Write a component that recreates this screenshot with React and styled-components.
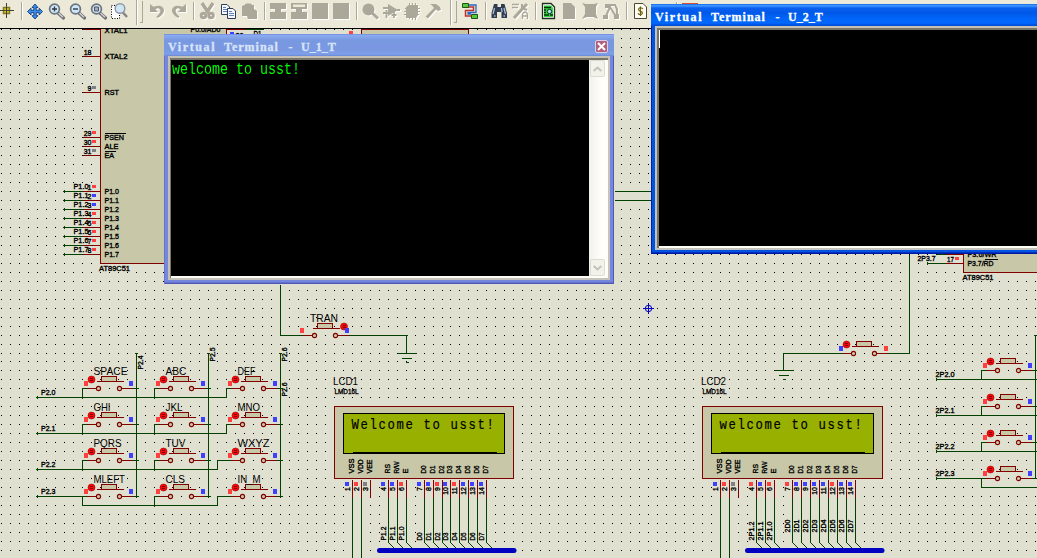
import React from "react";
import styled, { createGlobalStyle, css } from "styled-components";

const C = {
  canvas: "#e0e0d0", body: "#c8c8a8", pin: "#800000", wire: "#004000",
  bus: "#0000c0", hi: "#ff4040", lo: "#4040ff", off: "#808080",
  bar: "#ece9d8", dis: "#aca899", glass: "#98b000",
};

const GlobalStyle = createGlobalStyle`
  html, body { margin: 0; padding: 0; overflow: hidden; background: ${C.canvas}; }
`;

/* ---------- frame ---------- */
const Page = styled.div`
  position: relative;
  display: flex;
  flex-direction: column;
  width: 1037px;
  height: 558px;
  overflow: hidden;
  font-family: "Liberation Sans", Arial, sans-serif;
`;
const Toolbar = styled.div`
  display: flex;
  align-items: flex-start;
  flex: none;
  height: 28px;
  border-bottom: 1px solid #000;
  background: ${C.bar};
`;
const Tool = styled.div`
  flex: none;
  display: flex;
  justify-content: center;
  width: 21px;
  padding-top: 3px;
  margin-left: ${(p) => p.$shift || 0}px;
`;
const Glyph = styled.svg`
  width: 17px;
  height: 17px;
  display: block;
  overflow: visible;
  ${(p) => p.$off && css`
    color: ${C.dis};
    filter: drop-shadow(1px 1px 0 #fff);
  `}
`;
const Divider = styled.div`
  flex: none;
  width: 1px;
  height: 18px;
  margin: 2px ${(p) => p.$after ?? 3}px 0 4px;
  background: ${C.dis};
  box-shadow: 1px 0 0 #fff;
`;
const Grip = styled.div`
  flex: none;
  display: flex;
  gap: 3px;
  width: ${(p) => p.$w}px;
  height: 25px;
  padding-left: 6px;
  box-sizing: border-box;
  &::before { content: ""; width: 1px; height: 25px; background: ${C.dis}; box-shadow: 1px 0 0 #fff; }
  &::after { content: ""; width: 2px; height: 21px; margin-top: 1px; border: solid ${C.dis}; border-width: 0 1px 1px 0; }
`;

const Lens = ({ children }) => (
  <>
    <path d="M10 10 L15.500 15" stroke="#707078" strokeWidth="3.200" strokeLinecap="round" />
    <path d="M10.500 10 L15 14.300" stroke="#d4d4d4" strokeWidth="1.300" />
    <circle cx="6.500" cy="6" r="4.900" fill="#cfe6f4" stroke="#6c7480" strokeWidth="1.700" />
    {children}
  </>
);

const GLYPHS = {
  origin: <><path d="M1 7.500H16M8.500 0V15" stroke="#404030" /><path d="M5.500 4.500h6v6h-6z" fill="#d8cc20" stroke="#807a20" strokeWidth="1.500" /><path d="M5 7.500H12M8.500 4V11" stroke="#404030" /></>,
  move: <><path d="M8 1L11 4.500H9.200V7.300H12.200V5.200L15.500 8.500L12.200 12V9.700H9.200V12.700H11L8 16L5 12.700H6.800V9.700H4V12L0.500 8.500L4 5.200V7.300H6.800V4.500H5z" fill="#3c90e8" stroke="#103c88" strokeWidth=".9" /></>,
  zin: <Lens><path d="M4 6H9M6.500 3.500V8.500" stroke="#303848" strokeWidth="1.300" /></Lens>,
  zout: <Lens><path d="M4 6H9" stroke="#303848" strokeWidth="1.400" /></Lens>,
  zall: <Lens><path d="M4.500 4h4v4h-4z" fill="#aab" stroke="#505868" /></Lens>,
  zarea: <><path d="M.5 2.500H8.500V15.500H.5z" fill="#fff" stroke="#000" strokeDasharray="1 1.500" /><g transform="translate(2 0)"><path d="M10 9.500L14 14" stroke="#888" strokeWidth="2.600" /><circle cx="7" cy="5.500" r="4.800" fill="#cfe6f4" stroke="#9098a4" strokeWidth="1.500" /></g></>,
  undo: <path d="M1 1V9H9L6.500 6.300Q10 4 11.300 7Q12 10 7.500 13.500L8.500 15Q15.500 11.500 15 6.500Q13 .5 4.500 3.800z" fill="currentColor" />,
  redo: <path d="M16 1V9H8L10.500 6.300Q7 4 5.700 7Q5 10 9.500 13.500L8.500 15Q1.500 11.500 2 6.500Q4 .5 12.500 3.800z" fill="currentColor" />,
  cut: <><path d="M3 0L9.500 10M14 0L7.500 10" stroke="currentColor" strokeWidth="3.400" /><circle cx="4.500" cy="12.500" r="2.300" fill="none" stroke="currentColor" strokeWidth="3" /><circle cx="12" cy="12.500" r="2.300" fill="none" stroke="currentColor" strokeWidth="3" /></>,
  copy: <><path d="M1.500 1.500H7L9.500 4V11.500H1.500z" fill="#f4f8ff" stroke="#303c58" /><path d="M3 4.500h3M3 6.500h4M3 8.500h4" stroke="#6080b0" /><path d="M7.500 5.500H13L15.500 8V15.500H7.500z" fill="#f4f8ff" stroke="#303c58" /><path d="M9 8.500h3M9 10.500h5M9 12.500h5" stroke="#6080b0" /></>,
  paste: <path d="M1 3Q4 2 5 .5H10L11 2H13V6L16 8V16H7L6 13H1z" fill="currentColor" />,
  block: <path d="M0 0H16V6H11V9H16V16H0V9H5V6H0z" fill="currentColor" />,
  block2: <><path d="M0 0H16V6H11V9H16V16H0V9H5V6H0z" fill="currentColor" /><path d="M2 1.500H14V4H2z" fill="#ece9d8" /></>,
  square: <path d="M0 0H16V16H0z" fill="currentColor" />,
  pick: <><circle cx="6.500" cy="6.500" r="6" fill="currentColor" /><path d="M9 9L16 15.500" stroke="currentColor" strokeWidth="3" /></>,
  gate: <><path d="M5 1L15 7L5 13z" fill="currentColor" /><path d="M0 5H6M0 10H8M3.500 7V15M14 7H17M11 9V15M8.500 12H13.500" stroke="currentColor" strokeWidth="1.800" /></>,
  chip: <><path d="M2 4L5 2H14V12L12 15H2z" fill="currentColor" /><path d="M1 5.500H16M0 8.500H16M0 11.500H15M5.500 0V16M8.500 0V17M11.500 0V17" stroke="currentColor" /></>,
  hammer: <path d="M5 1H11L15 4L16 7L13 8L11 6.500L3 15.500L0.500 13.500L9 5L7.500 3z" fill="currentColor" />,
  wire: <><path d="M6 4H11.500V7.500H3.500V13H9" fill="none" stroke="#c03028" strokeWidth="1.500" /><path d="M6 2H14V9.500H6V11H9" fill="none" stroke="#2868c8" strokeWidth="1.300" /><path d="M.5 .5h6v4h-6zM9.500 11.500h6v4h-6z" fill="#58c838" stroke="#185818" /></>,
  binoc: <><path d="M3 1H6.500V4H10V1H13.500L16 10V15H10.500V9H6V15H.5V10z" fill="#303c50" /><path d="M3.500 5L2 11M10.500 5L11 9M13 5L14.500 11M3 13h1.500M12.500 13H14" stroke="#a8bcd8" strokeWidth="1.300" /></>,
  wrench: <><path d="M0 1.500H7M0 4.500H6" stroke="currentColor" strokeWidth="1.500" /><path d="M15 1L11 5L2 15" stroke="currentColor" strokeWidth="3" /><path d="M10 1V5L15 7" stroke="currentColor" strokeWidth="2" fill="none" /><path d="M10.500 16V11Q13 7 15.500 11V16M10.500 13H15.500" fill="none" stroke="currentColor" strokeWidth="1.300" /></>,
  sheet: <><path d="M2.500 .5H11L14.500 4V15.500H2.500z" fill="#fff" stroke="#203020" strokeWidth="1.300" /><path d="M4 2.500H11.500L13 5V14H4z" fill="#38d848" /><path d="M4 4.500H11M4 7H6M4 9.500H6M4 12H9M10 12h3" stroke="#063008" strokeWidth="1.300" /><circle cx="9.500" cy="8.500" r="2.200" fill="#a8e8f0" stroke="#102818" /></>,
  page: <path d="M2 0H10L14 4V16H2z" fill="currentColor" />,
  cross: <path d="M0 0L4 1H12L16 0L14 4V11L16 16L11 14H5L0 16L3 11V4z" fill="currentColor" />,
  nodes: <><path d="M2 1H8V5H2zM0 12H5V16H0zM11 11H16V16H11z" fill="currentColor" /><path d="M3 13L7 4M7 4L12 12M8 2H12L14 6V11" fill="none" stroke="currentColor" strokeWidth="2" /></>,
  bill: <><path d="M2.500 .5H11L14.500 4V15.500H2.500z" fill="#fffef0" stroke="#484838" /><path d="M11 6Q10 4.500 8 4.800Q6 5.500 7 7.500L10 9Q11 11 9 11.500Q6.500 11.800 6 10.300M8.500 3.500V13" fill="none" stroke="#706010" strokeWidth="1.200" /></>,
  ares: <path d="M0 0H16V16H0z" fill="#d85030" />,
};
const T = ({ n, off, shift }) => (
  <Tool $shift={shift}><Glyph viewBox="0 0 17 17" fill="none" $off={off}>{GLYPHS[n]}</Glyph></Tool>
);

/* ---------- schematic ---------- */
const Sheet = styled.svg`
  display: block;
  flex: none;
  width: 1037px;
  height: 529px;
  background: ${C.canvas};
`;
const Line = styled.path`
  fill: none;
  stroke: ${(p) => p.$c || C.wire};
  stroke-width: 1px;
  shape-rendering: crispEdges;
`;
const Box = styled.rect`
  fill: ${(p) => p.$f || C.body};
  stroke: ${(p) => p.$c || C.pin};
  stroke-width: 1px;
  shape-rendering: crispEdges;
`;
const Led = styled.rect`
  fill: ${(p) => p.$c};
  shape-rendering: crispEdges;
`;
const Small = styled.text`
  font: 7px "Liberation Sans", Arial, sans-serif;
  fill: #000;
  stroke: #000;
  stroke-width: 0.35px;
`;
const Name = styled.text`
  font: 11.500px "Liberation Sans", Arial, sans-serif;
  fill: #000;
`;
const Lcd = styled.text`
  font: 15px "Liberation Mono", "Courier New", monospace;
  letter-spacing: 1.975px;
  fill: #000;
  stroke: #000;
  stroke-width: 0.2px;
  white-space: pre;
`;
const Terminal = styled.circle`
  fill: ${C.body};
  stroke: ${C.pin};
  stroke-width: 1.1px;
`;

const L = ({ x, y, w, children, up, end }) => (
  <Small
    x={up ? 0 : x} y={up ? 0 : y}
    transform={up ? `translate(${x} ${y}) rotate(-90)` : undefined}
    textLength={w} lengthAdjust="spacingAndGlyphs" textAnchor={end ? "end" : "start"}
  >{children}</Small>
);
const N = ({ x, y, w, children }) => (
  <Name x={x} y={y} textLength={w} lengthAdjust="spacingAndGlyphs">{children}</Name>
);
const Sq = ({ x, y, c, h = 4 }) => <Led x={x - 0.5} y={y - 0.5} width="4" height={h} $c={c} />;

const xs = [], ys = [];
for (let x = 1; x <= 442; x += 9) xs.push(x);
for (let x = 450; x < 1037; x += 9) xs.push(x);
for (let y = 29; y <= 353; y += 9) ys.push(y);
for (let y = 361; y < 558; y += 9) ys.push(y);
const DOTS = ys.map((y) => xs.map((x) => `M${x - 0.5} ${y}h1`).join("")).join("");

const Switch = ({ x, y, left = C.hi, right = C.lo, led = -7 }) => (
  <g>
    <Line $c={C.pin} d={`M${x - 12} ${y}H${x - 2}M${x + 23} ${y}H${x + 34}M${x - 2} ${y - 7}H${x + 25}`} />
    <Terminal cx={x} cy={y} r="2.100" />
    <Terminal cx={x + 21} cy={y} r="2.100" />
    <Box x={x + 3} y={y - 12} width="15" height="5" />
    <circle cx={x + led} cy={y - 9} r="3.500" fill="#f80808" stroke="#a00000" strokeWidth=".6" />
    <Line $c="#800000" d={`M${x + led - 1.500} ${y - 10}h3M${x + led - 1.500} ${y - 8}h3`} />
    <Sq x={x - 14} y={y - 7} c={left} h={5} />
    <Sq x={x + 31} y={y - 7} c={right} h={5} />
  </g>
);

const Ground = ({ x, y }) => (
  <Line d={`M${x - 9} ${y}h19M${x - 5} ${y + 5}h10M${x - 1} ${y + 9}h3`} />
);

const LcdModule = ({ id, x, pins, leds, text, nets, busX, prefix }) => {
  const names = ["VSS", "VDD", "VEE", "RS", "R/W", "E", "D0", "D1", "D2", "D3", "D4", "D5", "D6", "D7"];
  const w = [15, 14, 14, 9.5, 12, 5, 8, 8, 8, 8, 8, 8, 8, 8];
  return (
    <g>
      <N x={x - 1.500} y={384.500} w={25}>{id}</N>
      <L x={x} y={393.500} w={24}>LMD16L</L>
      <Box x={x} y={406} width={id === "LCD1" ? 179 : 180} height={72} />
      <Box x={x + 9} y={413} width={id === "LCD1" ? 161 : 162} height={40} $f={C.glass} $c="#000" />
      <Line $c="#000" d={`M${x + 18} 452H${x + 162}`} />
      <Lcd transform={`translate(${x + 17} 428) scale(.82 1)`}>{text}</Lcd>
      {pins.map((p, i) => (
        <g key={p}>
          <Line $c={C.pin} d={`M${p} 479V497`} />
          {i < 2 && <Line d={`M${p} 497V558`} />}
          {i > 2 && <Line d={`M${p} 497V542`} />}
          {i > 2 && <path d={`M${p} 542L${p + 8} 550`} stroke={C.wire} fill="none" />}
          <L up x={p + 1.500} y={473} w={w[i]}>{names[i]}</L>
          <Sq x={p - 7} y={482} c={{ b: C.lo, r: C.hi, g: C.off }[leds[i]]} />
          <L up end x={p - 2.500} y={486.500}>{i + 1}</L>
          {i > 2 && (
            <L up x={p - 3} y={i > 5 && prefix ? 532 : 540} w={(i > 5 ? 8 : 14) + (prefix ? 5 : 0)}>
              {nets[i - 3]}
            </L>
          )}
        </g>
      ))}
      <path d={`M${busX + 2} 550H${busX + 136.500}`} stroke={C.bus} strokeWidth="5" strokeLinecap="round" />
    </g>
  );
};

const KEYS = [
  [["SPACE", 34], ["ABC", 21], ["DEF", 18]],
  [["GHI", 17], ["JKL", 17], ["MNO", 22.500]],
  [["PQRS", 28], ["TUV", 20], ["WXYZ", 32]],
  [["MLEFT", 31.500], ["CLS", 19.500], ["IN_M", 23]],
];

const Keypad = () => (
  <g>
    <Line d="M136 352V497M208 352V497M280 352V497" />
    <Line d="M37 397H226V388H231M37 433H226V424H231M37 469H217V460H231M37 496H86M82 496V505H217V496H231M154 506V496H158" />
    {[388, 424, 460].map((y) => <Line key={y} d={`M86 ${y}H82V${y + 10}M158 ${y}H154V${y + 10}`} />)}
    {[0, 1, 2, 3].map((r) => <Line key={r} d={`M131 ${388 + r * 36}h7M203 ${388 + r * 36}h7M275 ${388 + r * 36}h7`} />)}
    {[397, 433, 469, 496].map((y, i) => (
      <g key={y}>
        <Line d={`M37 ${y - 1.500}v3M35.500 ${y}h2`} />
        <L x={40.500} y={y - 2.500} w={14.500}>{`P2.${i}`}</L>
      </g>
    ))}
    {[136, 208, 280].map((x) => <Line key={x} d={`M${x - 1.500} 353h3`} />)}
    {KEYS.map((row, r) => row.map(([t, w], c) => (
      <g key={t}>
        <Switch x={98 + c * 72} y={388 + r * 36} />
        <N x={93 + c * 72} y={374.500 + r * 36} w={w}>{t}</N>
      </g>
    )))}
    <L up x={142.500} y={369} w={14}>P2.4</L>
    <L up x={214.500} y={361} w={14}>P2.5</L>
    <L up x={286.500} y={361} w={14}>P2.6</L>
    <L up x={286.500} y={396} w={14}>P2.6</L>
  </g>
);

const Schematic = () => (
  <Sheet viewBox="0 29 1037 529">
    <g transform="translate(.5 .5)">
      <Line $c="#000" d={DOTS} />
      {/* left controller */}
      <Box x={100} y={20} width={126} height={243} />
      <L x={104} y={32.500} w={23}>XTAL1</L>
      <L x={190} y={31.500} w={30}>P0.0/AD0</L>
      <Line $c={C.pin} d="M82 29H100M226 29H245" />
      <Line d="M245 29H263" />
      <Sq x={230} y={32} c={C.lo} />
      <L x={235} y={37} w={8}>39</L>
      <L x={253} y={35} w={8}>D1</L>
      <Box x={361} y={29} width={107} height={30} />
      <Sq x={349} y={31} c={C.hi} />
      {[["18", "XTAL2", 56, 23], ["9", "RST", 92, 14.500, C.off], ["29", "PSEN", 137, 19.500, C.hi], ["30", "ALE", 146, 14, C.hi], ["31", "EA", 155, 9.500, C.off]].map(([n, t, y, w, c]) => (
        <g key={t}>
          <Line $c={C.pin} d={`M82 ${y}H100`} />
          <L x={91} y={y - 2} end>{n}</L>
          <L x={104} y={y + 2.500} w={w}>{t}</L>
          {c && <Sq x={92} y={y - 6} c={c} h={3} />}
        </g>
      ))}
      <Line $c="#000" d="M104 133h21M104 151h11" />
      {[C.hi, C.lo, C.lo, C.hi, C.hi, C.hi, C.hi, C.hi].map((c, i) => {
        const y = 191 + i * 9;
        return (
          <g key={i}>
            <Line d={`M62.500 ${y}H82M64 ${y - 1.500}v3`} />
            <Line $c={C.pin} d={`M82 ${y}H100`} />
            <L x={73} y={y - 2.500} w={15}>{`P1.${i}`}</L>
            <L x={91} y={y - 2} end>{i + 1}</L>
            <Sq x={92} y={y - 6} c={c} h={3} />
            <L x={104} y={y + 2.500} w={14.500}>{`P1.${i}`}</L>
          </g>
        );
      })}
      <L x={98.500} y={270.500} w={31}>AT89C51</L>

      {/* right controller */}
      <Box x={963} y={200} width={100} height={72} />
      <Line d="M936 254H945M926 263H945M927 261.500v3" />
      <Line $c={C.pin} d="M945 254H963M945 263H963" />
      <L x={967} y={256.500} w={29}>P3.6/WR</L>
      <L x={967} y={265.500} w={26}>P3.7/RD</L>
      <Line $c="#000" d="M984 259h13" />
      <L x={917} y={260.500} w={18}>2P3.7</L>
      <L x={946.500} y={261} w={7}>17</L>
      <Sq x={955} y={257} c={C.hi} h={3} />
      <L x={962} y={279.500} w={31}>AT89C51</L>

      {/* reset switches and grounds */}
      <Line d="M614 191H651M614 200H651M280 284V335H302M347 335H407M406 334V353M909 254V353H886M842 353H782M783 352V370" />
      <Switch x={314} y={335} led={29.500} />
      <N x={309.500} y={321.500} w={28}>TRAN</N>
      <Ground x={406} y={353} />
      <Switch x={853} y={353} left={C.lo} right={C.hi} />
      <Ground x={783} y={370} />

      <Keypad />

      {/* second keypad */}
      <Line d="M1035 334V478M1033.500 335h3M935 379H1037M935 415H1037M935 451H1037M935 478H986M981 478V487H1037" />
      {[370, 406, 442, 478].map((y, i) => {
        const b = i === 3 ? y : y + 9;
        return (
          <g key={y}>
            <Line d={`M986 ${y}H981V${b}M1030 ${y}H1037M936 ${b - 1.500}v3`} />
            <Switch x={997} y={y} />
            <L x={935} y={b - 2.500} w={19}>{`2P2.${i}`}</L>
          </g>
        );
      })}

      <LcdModule id="LCD1" x={334} pins={[352, 361, 370, 388, 397, 406, 424, 433, 442, 450, 459, 468, 477, 486]}
        leds="brgbbrbbrbrbbb" text="Welcome to usst!" busX={377}
        nets={["P1.2", "P1.1", "P1.0", "D0", "D1", "D2", "D3", "D4", "D5", "D6", "D7"]} />
      <LcdModule id="LCD2" x={702} pins={[720, 729, 738, 756, 765, 774, 792, 801, 810, 819, 828, 837, 846, 855]}
        leds="brgrbrrbbbbrbb" text="welcome to usst!" busX={745} prefix
        nets={["2P1.2", "2P1.1", "2P1.0", "2D0", "2D1", "2D2", "2D3", "2D4", "2D5", "2D6", "2D7"]} />

      <circle cx="648" cy="308" r="3.200" fill="none" stroke={C.bus} />
      <Line $c={C.bus} d="M642.500 308H653.500M648 302.500V313.500" />
    </g>
  </Sheet>
);

/* ---------- terminal windows ---------- */
const Win = styled.section`
  position: absolute;
  left: ${(p) => p.$x}px;
  top: ${(p) => p.$y}px;
  width: ${(p) => p.$w}px;
  height: 250px;
  box-sizing: border-box;
  display: flex;
  flex-direction: column;
  padding: 0 4px 4px;
  background: ${(p) => (p.$active ? "#0054e3" : "#7487dc")};
  box-shadow: inset 1px 0 0 ${(p) => (p.$active ? "#0020b0" : "#6474d4")},
    inset -1px -1px 0 ${(p) => (p.$active ? "#0018a0" : "#5058b8")},
    inset 0 -2px 0 ${(p) => (p.$active ? "#0030c0" : "#6470cc")};
`;
const TitleBar = styled.header`
  flex: none;
  display: flex;
  align-items: center;
  justify-content: space-between;
  height: 22px;
  margin: 0 -4px;
  padding: 3px 6px 0 4px;
  box-sizing: border-box;
  background: ${(p) => p.$active
    ? "linear-gradient(#0058e0 0, #3c94ff 1px, #3c94ff 2px, #0a60ee 4px, #0058e8 9px, #0066fa 15px, #0068ff 19px, #0048d0 22px)"
    : "linear-gradient(#6878d8 0, #8aacf0 1px, #84a4ec 3px, #7898e0 6px, #7a98e2 16px, #7ea0e8 20px, #6c88d8 22px)"};
`;
const Title = styled.h1`
  display: flex;
  gap: 7px;
  margin: 0;
  padding-top: 2px;
  font: bold 12px/17px "Liberation Serif", "Times New Roman", serif;
  -webkit-text-stroke: 0.3px currentColor;
  white-space: pre;
  color: ${(p) => (p.$active ? "#fff" : "#d8e4f8")};
`;
const Word = styled.span`
  width: ${(p) => p.$cells * 7}px;
  letter-spacing: ${(p) => p.$track || 0}px;
  text-align: ${(p) => (p.$cells === 1 ? "center" : "left")};
`;
const WindowTitle = ({ active, port }) => (
  <Title $active={active}>
    <Word $cells={7} $track={1.6}>Virtual</Word>
    <Word $cells={8} $track={1}>Terminal</Word>
    <Word $cells={1}>-</Word>
    <Word $cells={5}>{port}</Word>
  </Title>
);
const Close = styled.button`
  width: 13px;
  height: 13px;
  margin: 0;
  padding: 0;
  display: grid;
  place-items: center;
  border: 1px solid #d8d0e8;
  border-radius: 2px;
  background: #b0607c;
`;
const Client = styled.div`
  flex: 1;
  display: flex;
  min-height: 0;
  background: #000;
  border: 2px solid #c4c1b4;
  border-right-color: #c4c4bc;
  border-bottom-color: #c4c4bc;
  box-shadow: inset ${(p) => (p.$active ? 2 : 1)}px 2px 0 #77746a, inset -2px -2px 0 #fffef4;
  padding: 2px 2px 2px ${(p) => (p.$active ? 2 : 1)}px;
`;
const Screen = styled.div`
  flex: 1;
  min-width: 0;
  overflow: hidden;
`;
const Output = styled.div`
  width: max-content;
  margin-left: 1px;
  font: 16.500px/20px "Liberation Mono", "Courier New", monospace;
  color: #00ff00;
  white-space: pre;
  transform: scaleX(0.808);
  transform-origin: left;
`;
const Caret = styled.div`
  width: 1px;
  height: 18px;
  background: #fff;
`;
const Scroll = styled.div`
  flex: none;
  width: 17px;
  display: flex;
  flex-direction: column;
  justify-content: space-between;
  background: linear-gradient(90deg, #f2f0ec, #fefefa 70%, #fff);
`;
const ScrollBtn = styled.button`
  width: 15px;
  height: 17px;
  margin: 0 0 0 1px;
  padding: 0;
  display: grid;
  place-items: center;
  border: 1px solid #dddcd0;
  border-radius: 2px;
  background: #f2f1ea;
`;
const Arrow = ({ d }) => (
  <svg width="9" height="6" viewBox="0 0 9 6"><path d={d} fill="none" stroke="#c4c2b8" strokeWidth="2" /></svg>
);

export default function App() {
  return (
    <Page>
      <GlobalStyle />
      <Toolbar>
        <T n="origin" shift={-4} />
        <Divider />
        <T n="move" /><T n="zin" /><T n="zout" /><T n="zall" /><T n="zarea" />
        <Grip $w={17} />
        <T n="undo" off /><T n="redo" off />
        <Divider />
        <T n="cut" off /><T n="copy" /><T n="paste" off />
        <Divider />
        <T n="block" off /><T n="block2" off /><T n="square" off /><T n="square" off />
        <Divider />
        <T n="pick" off /><T n="gate" off /><T n="chip" off /><T n="hammer" off />
        <Grip $w={16} />
        <T n="wire" />
        <Divider />
        <T n="binoc" /><T n="wrench" off />
        <Divider $after={2} />
        <T n="sheet" /><T n="page" off /><T n="cross" off /><T n="nodes" off />
        <Divider />
        <T n="bill" />
        <Tool />
        <Divider />
        <T n="ares" />
      </Toolbar>
      <Schematic />
      <Win $x={164} $y={34} $w={450}>
        <TitleBar>
          <WindowTitle port="U_1_T" />
          <Close aria-label="Close">
            <svg width="9" height="9" viewBox="0 0 9 9"><path d="M1 1L8 8M8 1L1 8" stroke="#fff" strokeWidth="2" /></svg>
          </Close>
        </TitleBar>
        <Client>
          <Screen><Output>welcome to usst!</Output></Screen>
          <Scroll>
            <ScrollBtn aria-label="Scroll up"><Arrow d="M.7 5L4.500 1.500L8.300 5" /></ScrollBtn>
            <ScrollBtn aria-label="Scroll down"><Arrow d="M.7 1L4.500 4.500L8.300 1" /></ScrollBtn>
          </Scroll>
        </Client>
      </Win>
      <Win $x={651} $y={4} $w={450} $active>
        <TitleBar $active><WindowTitle active port="U_2_T" /></TitleBar>
        <Client $active><Screen><Caret /></Screen></Client>
      </Win>
    </Page>
  );
}
